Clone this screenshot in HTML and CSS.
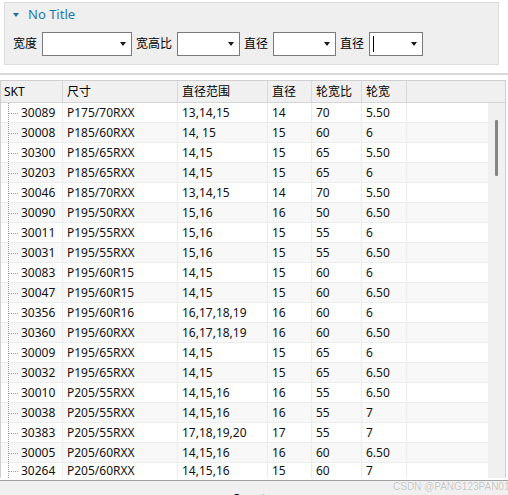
FILE: index.html
```html
<!DOCTYPE html>
<html>
<head>
<meta charset="utf-8">
<link rel="stylesheet" href="styles.css">
</head>
<body>
<div class="panel">
  <div class="panel-title"><span class="tri"></span><span>No Title</span></div>
  <div class="filters">
    <span class="lbl">宽度</span><span class="combo w90"><span class="arrow"></span></span>
    <span class="lbl">宽高比</span><span class="combo w63"><span class="arrow"></span></span>
    <span class="lbl">直径</span><span class="combo w63"><span class="arrow"></span></span>
    <span class="lbl">直径</span><span class="combo w54"><span class="caret"></span><span class="arrow"></span></span>
  </div>
</div>
<div class="sep"></div>
<div class="grid">
  <div class="head">
    <div class="hc">SKT</div><div class="hc">尺寸</div><div class="hc">直径范围</div><div class="hc">直径</div><div class="hc">轮宽比</div><div class="hc">轮宽</div><div class="hc last"></div>
  </div>
  <div class="body">
    <div class="rows">
      <div class="tree-line"></div>
      <div class="row"><div class="c skt">30089</div><div class="c">P175/70RXX</div><div class="c">13,14,15</div><div class="c">14</div><div class="c">70</div><div class="c">5.50</div><div class="c last"></div></div>
      <div class="row"><div class="c skt">30008</div><div class="c">P185/60RXX</div><div class="c">14, 15</div><div class="c">15</div><div class="c">60</div><div class="c">6</div><div class="c last"></div></div>
      <div class="row"><div class="c skt">30300</div><div class="c">P185/65RXX</div><div class="c">14,15</div><div class="c">15</div><div class="c">65</div><div class="c">5.50</div><div class="c last"></div></div>
      <div class="row"><div class="c skt">30203</div><div class="c">P185/65RXX</div><div class="c">14,15</div><div class="c">15</div><div class="c">65</div><div class="c">6</div><div class="c last"></div></div>
      <div class="row"><div class="c skt">30046</div><div class="c">P185/70RXX</div><div class="c">13,14,15</div><div class="c">14</div><div class="c">70</div><div class="c">5.50</div><div class="c last"></div></div>
      <div class="row"><div class="c skt">30090</div><div class="c">P195/50RXX</div><div class="c">15,16</div><div class="c">16</div><div class="c">50</div><div class="c">6.50</div><div class="c last"></div></div>
      <div class="row"><div class="c skt">30011</div><div class="c">P195/55RXX</div><div class="c">15,16</div><div class="c">15</div><div class="c">55</div><div class="c">6</div><div class="c last"></div></div>
      <div class="row"><div class="c skt">30031</div><div class="c">P195/55RXX</div><div class="c">15,16</div><div class="c">15</div><div class="c">55</div><div class="c">6.50</div><div class="c last"></div></div>
      <div class="row"><div class="c skt">30083</div><div class="c">P195/60R15</div><div class="c">14,15</div><div class="c">15</div><div class="c">60</div><div class="c">6</div><div class="c last"></div></div>
      <div class="row"><div class="c skt">30047</div><div class="c">P195/60R15</div><div class="c">14,15</div><div class="c">15</div><div class="c">60</div><div class="c">6.50</div><div class="c last"></div></div>
      <div class="row"><div class="c skt">30356</div><div class="c">P195/60R16</div><div class="c">16,17,18,19</div><div class="c">16</div><div class="c">60</div><div class="c">6</div><div class="c last"></div></div>
      <div class="row"><div class="c skt">30360</div><div class="c">P195/60RXX</div><div class="c">16,17,18,19</div><div class="c">16</div><div class="c">60</div><div class="c">6.50</div><div class="c last"></div></div>
      <div class="row"><div class="c skt">30009</div><div class="c">P195/65RXX</div><div class="c">14,15</div><div class="c">15</div><div class="c">65</div><div class="c">6</div><div class="c last"></div></div>
      <div class="row"><div class="c skt">30032</div><div class="c">P195/65RXX</div><div class="c">14,15</div><div class="c">15</div><div class="c">65</div><div class="c">6.50</div><div class="c last"></div></div>
      <div class="row"><div class="c skt">30010</div><div class="c">P205/55RXX</div><div class="c">14,15,16</div><div class="c">16</div><div class="c">55</div><div class="c">6.50</div><div class="c last"></div></div>
      <div class="row"><div class="c skt">30038</div><div class="c">P205/55RXX</div><div class="c">14,15,16</div><div class="c">16</div><div class="c">55</div><div class="c">7</div><div class="c last"></div></div>
      <div class="row"><div class="c skt">30383</div><div class="c">P205/55RXX</div><div class="c">17,18,19,20</div><div class="c">17</div><div class="c">55</div><div class="c">7</div><div class="c last"></div></div>
      <div class="row"><div class="c skt">30005</div><div class="c">P205/60RXX</div><div class="c">14,15,16</div><div class="c">16</div><div class="c">60</div><div class="c">6.50</div><div class="c last"></div></div>
      <div class="row lastrow"><div class="c skt">30264</div><div class="c">P205/60RXX</div><div class="c">14,15,16</div><div class="c">15</div><div class="c">60</div><div class="c">7</div><div class="c last"></div></div>
    </div>
    <div class="vscroll"><div class="thumb"></div></div>
  </div>
</div>
<div class="footer"><span class="btn-text">Count</span></div>
<div class="watermark">CSDN @PANG123PAN01</div>
</body>
</html>
```
FILE: styles.css
```css
html, body {
  margin: 0;
  padding: 0;
  background: #ffffff;
  width: 508px;
  height: 495px;
  overflow: hidden;
  font-family: "Noto Sans", "Noto Sans CJK SC", sans-serif;
  font-size: 12px;
  color: #000;
  position: relative;
}

.panel {
  margin: 2px 9px 0 4px;
  height: 61px;
  background: #efefef;
  border: 1px solid #dcdcdc;
  box-sizing: content-box;
}

.panel-title {
  display: flex;
  align-items: center;
  height: 22px;
  padding-left: 8px;
  color: #1f78b0;
  font-size: 13px;
}

.tri {
  width: 0;
  height: 0;
  border-left: 3.5px solid transparent;
  border-right: 3.5px solid transparent;
  border-top: 4px solid #1f6e9e;
  margin-right: 9px;
  margin-top: 1px;
}

.filters {
  display: flex;
  align-items: center;
  margin-top: 7px;
  padding-left: 8px;
  height: 24px;
}

.lbl {
  margin-right: 5px;
  line-height: 24px;
}

.combo {
  position: relative;
  height: 22px;
  background: #fff;
  border: 1px solid #7a7a7a;
  margin-right: 4px;
}

.w90 { width: 88px; }
.w63 { width: 61px; }
.w54 { width: 52px; }

.arrow {
  position: absolute;
  right: 5px;
  top: 9px;
  width: 0;
  height: 0;
  border-left: 3.5px solid transparent;
  border-right: 3.5px solid transparent;
  border-top: 4px solid #1a1a1a;
}

.caret {
  position: absolute;
  left: 3px;
  top: 3px;
  width: 1px;
  height: 16px;
  background: #000;
}

.sep {
  margin-top: 8px;
  height: 2px;
  background: #d9d9d9;
}

.grid {
  margin-top: 5px;
  width: 506px;
  border: 1px solid #cfcfcf;
  border-bottom: none;
  height: 398px;
  box-sizing: border-box;
  background: #fff;
}

.head {
  display: grid;
  grid-template-columns: 62px 115px 90px 44px 50px 45px 1fr;
  height: 21px;
  background: #f0f0f0;
  border-bottom: 1px solid #d5d5d5;
}

.hc {
  padding-left: 4px;
  line-height: 21px;
  border-right: 1px solid #d9d9d9;
  white-space: nowrap;
}
.hc:first-child { padding-left: 3px; }
.hc.last { border-right: none; }

.body {
  display: flex;
  height: 375px;
  overflow: hidden;
}

.rows {
  position: relative;
  width: 488px;
  height: 375px;
  overflow: hidden;
}

.tree-line {
  position: absolute;
  left: 7px;
  top: 0;
  height: 100%;
  border-left: 1px dotted #9a9a9a;
}

.row {
  display: grid;
  grid-template-columns: 62px 115px 90px 44px 50px 45px 1fr;
  height: 19px;
  border-bottom: 1px solid #ececec;
}
.row:nth-child(odd) { background: #f8f8f8; }
.row.lastrow { height: 15px; border-bottom: none; }
.row.lastrow .c { line-height: 15px; padding-top: 0; }
.row.lastrow .skt::before { top: 8px; }

.c {
  padding-left: 4px;
  line-height: 19px;
  border-right: 1px solid #ececec;
  white-space: nowrap;
  color: #111;
}
.c.last { border-right: none; }

.skt {
  position: relative;
  padding-left: 20px;
}
.skt::before {
  content: "";
  position: absolute;
  left: 8px;
  top: 10px;
  width: 9px;
  border-top: 1px dotted #9a9a9a;
}

.vscroll {
  width: 17px;
  background: #f0f0f0;
  position: relative;
}

.thumb {
  position: absolute;
  left: 7px;
  top: 17px;
  width: 3px;
  height: 56px;
  background: #858585;
  border-radius: 1px;
}

.footer {
  height: 20px;
  background: #f0f0f0;
  border-top: 1px solid #a0a0a0;
  margin-top: 2px;
  position: relative;
}

.btn-text {
  position: absolute;
  left: 232px;
  top: 9px;
  font-size: 12px;
  color: #000;
}

.watermark {
  position: absolute;
  left: 393px;
  top: 481px;
  font-family: "Liberation Sans", sans-serif;
  font-size: 10px;
  color: #c4c4c4;
  text-shadow: 0 0 1px #fff, 0 0 1px #fff;
  white-space: nowrap;
}
```
